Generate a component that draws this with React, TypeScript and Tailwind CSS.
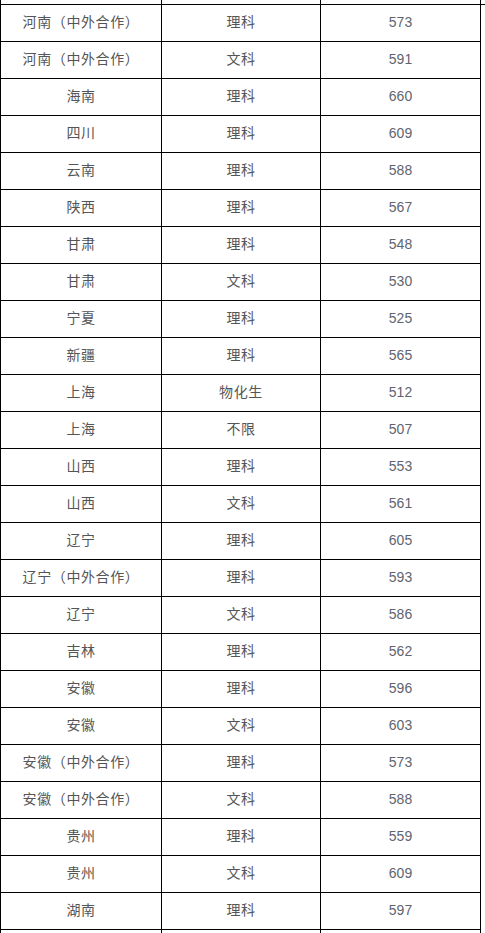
const rows: [string, string, string][] = [
  ['河南（中外合作）', '理科', '573'],
  ['河南（中外合作）', '文科', '591'],
  ['海南', '理科', '660'],
  ['四川', '理科', '609'],
  ['云南', '理科', '588'],
  ['陕西', '理科', '567'],
  ['甘肃', '理科', '548'],
  ['甘肃', '文科', '530'],
  ['宁夏', '理科', '525'],
  ['新疆', '理科', '565'],
  ['上海', '物化生', '512'],
  ['上海', '不限', '507'],
  ['山西', '理科', '553'],
  ['山西', '文科', '561'],
  ['辽宁', '理科', '605'],
  ['辽宁（中外合作）', '理科', '593'],
  ['辽宁', '文科', '586'],
  ['吉林', '理科', '562'],
  ['安徽', '理科', '596'],
  ['安徽', '文科', '603'],
  ['安徽（中外合作）', '理科', '573'],
  ['安徽（中外合作）', '文科', '588'],
  ['贵州', '理科', '559'],
  ['贵州', '文科', '609'],
  ['湖南', '理科', '597'],
  ['', '', ''],
]

const cjk = { fontFamily: '"Noto Sans CJK SC", "Noto Sans", sans-serif' }
const num = { fontFamily: '"Liberation Sans", Arial, sans-serif' }

export default function App() {
  return (
    <div className="h-[933px] w-[485px] overflow-hidden bg-white">
      <div className="flex h-[5px] border-b border-black">
        <div className="w-[162px] border-x border-black" />
        <div className="w-[159px] border-r border-black" />
        <div className="w-[160px] border-r border-black" />
      </div>
      {rows.map((r, i) => (
        <div key={i} className="flex h-[37px] border-b border-black w-[481px]">
          <div
            className="flex w-[162px] items-center justify-center border-x border-black pb-[3px] text-[14px] tracking-[0.6px] text-[#555]"
            style={cjk}
          >
            {r[0]}
          </div>
          <div
            className="flex w-[159px] items-center justify-center border-r border-black pb-[3px] text-[14px] tracking-[0.6px] text-[#555]"
            style={cjk}
          >
            {r[1]}
          </div>
          <div
            className="flex w-[160px] items-center justify-center border-r border-black pb-[1px] text-[14px] text-[#5f6470]"
            style={num}
          >
            {r[2]}
          </div>
        </div>
      ))}
    </div>
  )
}
